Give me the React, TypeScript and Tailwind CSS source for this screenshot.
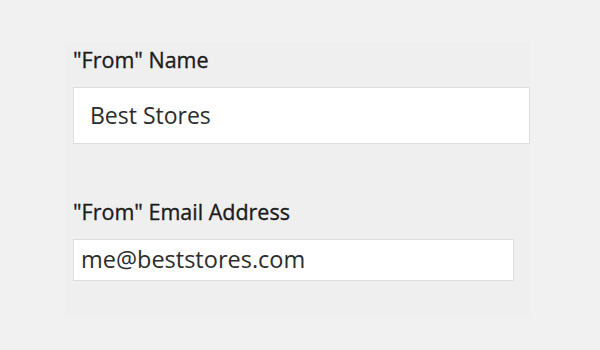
import React from 'react';

// Sender settings panel: two labelled text inputs
export default function App() {
  const label = "block text-[21.5px] leading-[28px] text-[#1c1c1c] [-webkit-text-stroke:0.35px_#1c1c1c]";

  return (
    <div className="w-[600px] h-[350px] bg-[#f1f1f1] pt-[42px] pl-[65px] font-['Open_Sans',sans-serif]">
      <div className="w-[465px] h-[274px] bg-[#efefef] pt-[4px] pl-[8px]">
        <label className={label}>"From" Name</label>
        <div className="mt-[13px] w-[457px] h-[57px] bg-white border border-[#dedede] flex items-center pl-[16px] text-[23px] text-[#2c2c2c]">
          Best Stores
        </div>

        <label className={`${label} mt-[54px]`}>"From" Email Address</label>
        <div className="mt-[13px] w-[441px] h-[42px] bg-white border border-[#dedede] flex items-center pl-[7px] text-[23.5px] text-[#2c2c2c]">
          me@beststores.com
        </div>
      </div>
    </div>
  );
}
